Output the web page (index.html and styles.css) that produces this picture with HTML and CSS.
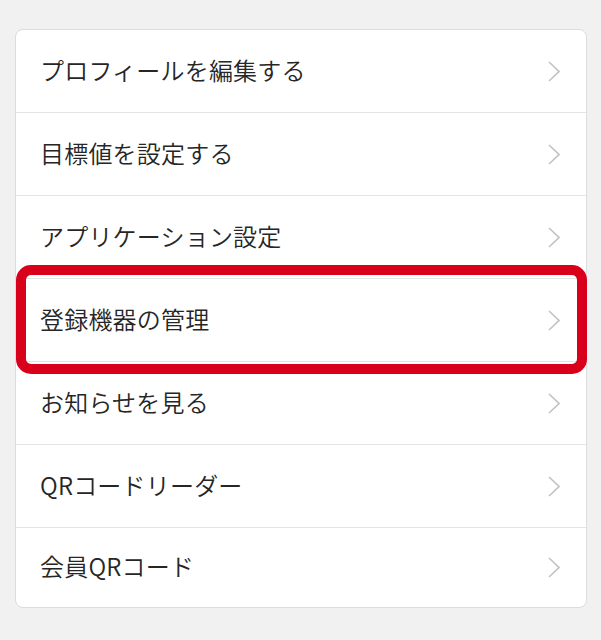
FILE: index.html
```html
<!DOCTYPE html>
<html lang="ja">
<head>
    <meta charset="UTF-8">
    <meta name="viewport" content="width=device-width, initial-scale=1.0">
    <title>設定メニュー</title>
    <link rel="stylesheet" href="styles.css">
</head>
<body>
    <ul class="menu">
        <li class="menu-item">
            <span class="label">プロフィールを編集する</span>
            <svg class="chevron" width="12" height="21" viewBox="0 0 12 21"><polyline points="1,1 11,10.5 1,20"/></svg>
        </li>
        <li class="menu-item">
            <span class="label">目標値を設定する</span>
            <svg class="chevron" width="12" height="21" viewBox="0 0 12 21"><polyline points="1,1 11,10.5 1,20"/></svg>
        </li>
        <li class="menu-item">
            <span class="label">アプリケーション設定</span>
            <svg class="chevron" width="12" height="21" viewBox="0 0 12 21"><polyline points="1,1 11,10.5 1,20"/></svg>
        </li>
        <li class="menu-item highlighted">
            <span class="label">登録機器の管理</span>
            <svg class="chevron" width="12" height="21" viewBox="0 0 12 21"><polyline points="1,1 11,10.5 1,20"/></svg>
            <div class="focus-ring"></div>
        </li>
        <li class="menu-item">
            <span class="label">お知らせを見る</span>
            <svg class="chevron" width="12" height="21" viewBox="0 0 12 21"><polyline points="1,1 11,10.5 1,20"/></svg>
        </li>
        <li class="menu-item">
            <span class="label">QRコードリーダー</span>
            <svg class="chevron" width="12" height="21" viewBox="0 0 12 21"><polyline points="1,1 11,10.5 1,20"/></svg>
        </li>
        <li class="menu-item last">
            <span class="label">会員QRコード</span>
            <svg class="chevron" width="12" height="21" viewBox="0 0 12 21"><polyline points="1,1 11,10.5 1,20"/></svg>
        </li>
    </ul>
</body>
</html>
```

FILE: styles.css
```css
body {
    margin: 0;
    background-color: #f1f1f1;
    font-family: "Noto Sans CJK JP", "Noto Sans", sans-serif;
}

.menu {
    list-style: none;
    margin: 29px 0 0 15px;
    padding: 0;
    width: 572px;
    box-sizing: border-box;
    background-color: #ffffff;
    border: 1px solid #dcdcdc;
    border-radius: 8px;
}

.menu-item {
    position: relative;
    display: flex;
    align-items: center;
    justify-content: space-between;
    height: 82px;
    padding: 0 26px 0 24px;
    border-bottom: 1px solid #e4e4e4;
}

.menu-item.last {
    height: 79px;
    border-bottom: none;
}

.label {
    margin-bottom: 4px;
    font-size: 24px;
    font-weight: 350;
    color: #262626;
    letter-spacing: 0.2px;
}

.chevron {
    fill: none;
    stroke: #c2c2c2;
    stroke-width: 1.6;
}

.focus-ring {
    position: absolute;
    top: -14px;
    bottom: -13px;
    left: 0;
    right: -1px;
    border: 10px solid #d9001b;
    border-radius: 15px;
}
```
